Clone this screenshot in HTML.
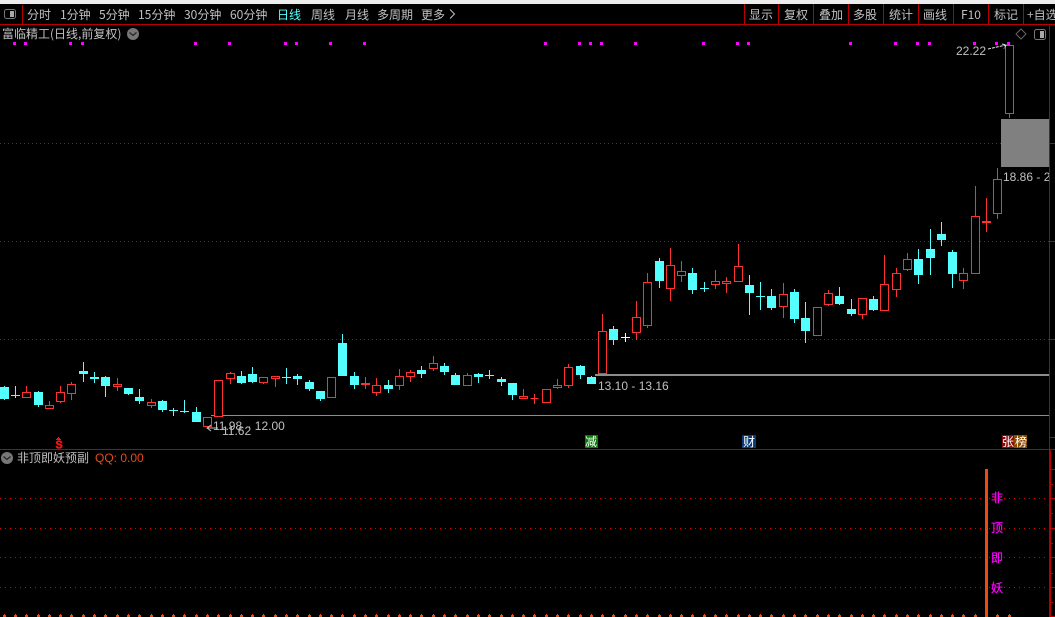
<!DOCTYPE html>
<html><head><meta charset="utf-8"><style>
html,body{margin:0;padding:0;background:#000;width:1055px;height:617px;overflow:hidden}
svg{display:block}
text{font-family:"WenQuanYi Zen Hei","Noto Sans CJK SC",sans-serif;font-size:12px;fill:#c0c0c0}
.n{font-family:"Liberation Sans",sans-serif}
</style></head><body>
<svg width="1055" height="617" viewBox="0 0 1055 617" xmlns="http://www.w3.org/2000/svg">
<rect width="1055" height="617" fill="#000"/>
<rect width="1055" height="4" fill="#ececec"/>
<g shape-rendering="crispEdges">
<path d="M0 143.5H1049M0 241.5H1049M0 339.5H1049" stroke="#c80000" stroke-dasharray="1 3" fill="none"/>
<path d="M0 498.5H985M0 528.5H985M0 557.5H985M0 587.5H985M989 498.5H1049M989 528.5H1049M989 557.5H1049M989 587.5H1049" stroke="#e00000" stroke-dasharray="1 4" fill="none"/>
<path d="M211 415.5H1049" stroke="#8c8c8c" fill="none"/>
<rect x="595" y="374" width="454" height="2" fill="#8c8c8c"/>
<rect x="1001" y="119" width="48" height="48" fill="#808080"/>
<!-- red wicks -->
<path fill="#ff3232" d="M26 386h1v12h-1zM49 401h1v8h-1zM60 386h1v17h-1zM71 382h1v18h-1zM117 378h1v13h-1zM151 399h1v9h-1zM230 372h1v12h-1zM263 377h1v7h-1zM275 376h1v11h-1zM365 377h1v12h-1zM376 378h1v18h-1zM399 369h1v21h-1zM410 370h1v12h-1zM433 356h1v15h-1zM467 373h1v13h-1zM523 389h1v10h-1zM534 394h1v10h-1zM557 379h1v10h-1zM568 364h1v24h-1zM602 314h1v60h-1zM636 301h1v39h-1zM647 273h1v55h-1zM670 248h1v53h-1zM681 261h1v21h-1zM715 270h1v19h-1zM726 277h1v16h-1zM738 244h1v38h-1zM783 283h1v35h-1zM828 290h1v16h-1zM862 298h1v21h-1zM884 255h1v56h-1zM896 268h1v29h-1zM907 253h1v18h-1zM963 268h1v21h-1zM975 186h1v88h-1zM986 198h1v34h-1zM997 168h1v51h-1zM1009 45h1v73h-1z"/>
<!-- red bodies -->
<path fill="#000" stroke="#ff3232" d="M22.500 392.500h8v5h-8zM45.500 405.500h8v3h-8zM56.500 392.500h8v9h-8zM67.500 384.500h8v9h-8zM113.500 384.500h8v2h-8zM147.500 402.500h8v3h-8zM203.500 417.500h8v9h-8zM214.500 380.500h8v36h-8zM226.500 373.500h8v5h-8zM259.500 377.500h8v5h-8zM271.500 376.500h8v2h-8zM327.500 377.500h8v20h-8zM361.500 383.500h8v1h-8zM372.500 385.500h8v7h-8zM395.500 376.500h8v9h-8zM406.500 372.500h8v4h-8zM429.500 363.500h8v5h-8zM463.500 375.500h8v10h-8zM519.500 396.500h8v2h-8zM530.500 398.500h8v0h-8zM542.500 389.500h8v13h-8zM553.500 385.500h8v2h-8zM564.500 367.500h8v18h-8zM598.500 331.500h8v42h-8zM632.500 317.500h8v15h-8zM643.500 282.500h8v43h-8zM666.500 265.500h8v23h-8zM677.500 271.500h8v4h-8zM711.500 281.500h8v3h-8zM722.500 281.500h8v2h-8zM734.500 266.500h8v15h-8zM779.500 294.500h8v12h-8zM813.500 307.500h8v28h-8zM824.500 293.500h8v11h-8zM858.500 298.500h8v16h-8zM880.500 284.500h8v26h-8zM892.500 273.500h8v16h-8zM903.500 259.500h8v10h-8zM959.500 273.500h8v7h-8zM971.500 216.500h8v57h-8zM982.500 221.500h8v1h-8zM993.500 179.500h8v34h-8zM1005.500 45.500h8v68h-8z"/>
<!-- cyan -->
<path fill="#54ffff" d="M4 386h1v14h-1zM0 387h9v12h-9zM15 386h1v12h-1zM11 395h9v1h-9zM38 391h1v16h-1zM34 392h9v13h-9zM83 362h1v20h-1zM79 371h9v3h-9zM94 372h1v11h-1zM90 377h9v2h-9zM105 376h1v21h-1zM101 377h9v9h-9zM128 388h1v7h-1zM124 388h9v6h-9zM139 389h1v15h-1zM135 397h9v4h-9zM162 400h1v12h-1zM158 401h9v9h-9zM173 408h1v8h-1zM169 410h9v1h-9zM184 400h1v13h-1zM180 411h9v1h-9zM196 407h1v15h-1zM192 412h9v10h-9zM241 371h1v13h-1zM237 376h9v7h-9zM252 367h1v16h-1zM248 374h9v8h-9zM286 368h1v16h-1zM282 377h9v1h-9zM297 374h1v11h-1zM293 376h9v3h-9zM309 380h1v11h-1zM305 382h9v7h-9zM320 391h1v10h-1zM316 391h9v8h-9zM342 334h1v42h-1zM338 343h9v33h-9zM354 372h1v17h-1zM350 376h9v9h-9zM388 380h1v13h-1zM384 385h9v4h-9zM421 366h1v12h-1zM417 370h9v4h-9zM444 363h1v12h-1zM440 366h9v6h-9zM455 373h1v12h-1zM451 375h9v10h-9zM478 373h1v10h-1zM474 374h9v3h-9zM489 370h1v9h-1zM485 375h9v1h-9zM501 377h1v9h-1zM497 379h9v3h-9zM512 383h1v17h-1zM508 383h9v12h-9zM580 365h1v14h-1zM576 366h9v9h-9zM591 376h1v8h-1zM587 377h9v7h-9zM613 326h1v19h-1zM609 329h9v11h-9zM659 258h1v30h-1zM655 261h9v20h-9zM692 268h1v26h-1zM688 273h9v17h-9zM704 282h1v10h-1zM700 288h9v1h-9zM749 275h1v40h-1zM745 285h9v8h-9zM760 282h1v28h-1zM756 296h9v1h-9zM771 289h1v21h-1zM767 296h9v12h-9zM794 289h1v34h-1zM790 292h9v27h-9zM805 302h1v41h-1zM801 318h9v13h-9zM839 287h1v18h-1zM835 296h9v8h-9zM851 299h1v17h-1zM847 309h9v5h-9zM873 296h1v15h-1zM869 299h9v11h-9zM918 249h1v35h-1zM914 259h9v16h-9zM930 229h1v46h-1zM926 249h9v9h-9zM941 222h1v24h-1zM937 234h9v6h-9zM952 250h1v38h-1zM948 252h9v22h-9z"/>
<path fill="#fff" d="M625 333h1v9h-1zM621 337h9v1h-9z"/>
<!-- magenta markers -->
<path fill="#ff00ff" d="M13 42h3v3h-3zM24 42h3v3h-3zM69 42h3v3h-3zM81 42h3v3h-3zM194 42h3v3h-3zM228 42h3v3h-3zM284 42h3v3h-3zM295 42h3v3h-3zM329 42h3v3h-3zM363 42h3v3h-3zM544 42h3v3h-3zM578 42h3v3h-3zM589 42h3v3h-3zM600 42h3v3h-3zM634 42h3v3h-3zM702 42h3v3h-3zM736 42h3v3h-3zM747 42h3v3h-3zM849 42h3v3h-3zM894 42h3v3h-3zM916 42h3v3h-3zM928 42h3v3h-3zM973 42h3v3h-3zM995 42h3v3h-3zM1007 42h3v3h-3z"/>
<!-- bottom pips -->
<path fill="#f04a10" d="M4 614h1v1h1v2h-3v-2h1zM15 614h1v1h1v2h-3v-2h1zM26 614h1v1h1v2h-3v-2h1zM38 614h1v1h1v2h-3v-2h1zM49 614h1v1h1v2h-3v-2h1zM60 614h1v1h1v2h-3v-2h1zM71 614h1v1h1v2h-3v-2h1zM83 614h1v1h1v2h-3v-2h1zM94 614h1v1h1v2h-3v-2h1zM105 614h1v1h1v2h-3v-2h1zM117 614h1v1h1v2h-3v-2h1zM128 614h1v1h1v2h-3v-2h1zM139 614h1v1h1v2h-3v-2h1zM151 614h1v1h1v2h-3v-2h1zM162 614h1v1h1v2h-3v-2h1zM173 614h1v1h1v2h-3v-2h1zM184 614h1v1h1v2h-3v-2h1zM196 614h1v1h1v2h-3v-2h1zM207 614h1v1h1v2h-3v-2h1zM218 614h1v1h1v2h-3v-2h1zM230 614h1v1h1v2h-3v-2h1zM241 614h1v1h1v2h-3v-2h1zM252 614h1v1h1v2h-3v-2h1zM263 614h1v1h1v2h-3v-2h1zM275 614h1v1h1v2h-3v-2h1zM286 614h1v1h1v2h-3v-2h1zM297 614h1v1h1v2h-3v-2h1zM309 614h1v1h1v2h-3v-2h1zM320 614h1v1h1v2h-3v-2h1zM331 614h1v1h1v2h-3v-2h1zM342 614h1v1h1v2h-3v-2h1zM354 614h1v1h1v2h-3v-2h1zM365 614h1v1h1v2h-3v-2h1zM376 614h1v1h1v2h-3v-2h1zM388 614h1v1h1v2h-3v-2h1zM399 614h1v1h1v2h-3v-2h1zM410 614h1v1h1v2h-3v-2h1zM421 614h1v1h1v2h-3v-2h1zM433 614h1v1h1v2h-3v-2h1zM444 614h1v1h1v2h-3v-2h1zM455 614h1v1h1v2h-3v-2h1zM467 614h1v1h1v2h-3v-2h1zM478 614h1v1h1v2h-3v-2h1zM489 614h1v1h1v2h-3v-2h1zM501 614h1v1h1v2h-3v-2h1zM512 614h1v1h1v2h-3v-2h1zM523 614h1v1h1v2h-3v-2h1zM534 614h1v1h1v2h-3v-2h1zM546 614h1v1h1v2h-3v-2h1zM557 614h1v1h1v2h-3v-2h1zM568 614h1v1h1v2h-3v-2h1zM580 614h1v1h1v2h-3v-2h1zM591 614h1v1h1v2h-3v-2h1zM602 614h1v1h1v2h-3v-2h1zM613 614h1v1h1v2h-3v-2h1zM625 614h1v1h1v2h-3v-2h1zM636 614h1v1h1v2h-3v-2h1zM647 614h1v1h1v2h-3v-2h1zM659 614h1v1h1v2h-3v-2h1zM670 614h1v1h1v2h-3v-2h1zM681 614h1v1h1v2h-3v-2h1zM692 614h1v1h1v2h-3v-2h1zM704 614h1v1h1v2h-3v-2h1zM715 614h1v1h1v2h-3v-2h1zM726 614h1v1h1v2h-3v-2h1zM738 614h1v1h1v2h-3v-2h1zM749 614h1v1h1v2h-3v-2h1zM760 614h1v1h1v2h-3v-2h1zM771 614h1v1h1v2h-3v-2h1zM783 614h1v1h1v2h-3v-2h1zM794 614h1v1h1v2h-3v-2h1zM805 614h1v1h1v2h-3v-2h1zM817 614h1v1h1v2h-3v-2h1zM828 614h1v1h1v2h-3v-2h1zM839 614h1v1h1v2h-3v-2h1zM851 614h1v1h1v2h-3v-2h1zM862 614h1v1h1v2h-3v-2h1zM873 614h1v1h1v2h-3v-2h1zM884 614h1v1h1v2h-3v-2h1zM896 614h1v1h1v2h-3v-2h1zM907 614h1v1h1v2h-3v-2h1zM918 614h1v1h1v2h-3v-2h1zM930 614h1v1h1v2h-3v-2h1zM941 614h1v1h1v2h-3v-2h1zM952 614h1v1h1v2h-3v-2h1zM963 614h1v1h1v2h-3v-2h1zM975 614h1v1h1v2h-3v-2h1zM997 614h1v1h1v2h-3v-2h1zM1009 614h1v1h1v2h-3v-2h1z"/>
<rect x="985" y="469" width="3" height="148" fill="#f04a10"/>
<!-- badges -->
<rect x="585" y="435" width="13" height="13" fill="#0a7a0a"/>
<rect x="742" y="435" width="14" height="13" fill="#0a3a78"/>
<rect x="1002" y="435" width="12" height="13" fill="#8b0a0a"/>
<rect x="1014" y="435" width="13" height="13" fill="#8a4a00"/>
<path fill="#ff1010" d="M58 437h1v1h1v1h1v1h-5v-1h1v-1h1z"/>
</g>

<!-- price labels -->
<text class="n" x="956" y="55">22.22</text>
<path d="M988 49L1006 45M1002 44l4 1-2 4" stroke="#e0e0e0" fill="none" stroke-dasharray="3 1"/>
<text class="n" x="1003" y="181">18.86 - 22.22</text>
<text class="n" x="598" y="390">13.10 - 13.16</text>
<text class="n" x="213" y="430" style="word-spacing:1px">11.98 - 12.00</text>
<text class="n" x="222" y="435">11.62</text>
<path d="M218 428H207M211 425l-4 3 4 3" stroke="#c0c0c0" fill="none"/>
<rect x="1050" y="25" width="5" height="424" fill="#000"/>

<!-- signal text -->
<text x="585" y="446" style="fill:#fff">减</text>
<text x="743" y="446" style="fill:#fff">财</text>
<text x="1002" y="446" style="fill:#fff">张</text>
<text x="1015" y="446" style="fill:#fff">榜</text>
<text x="55.500" y="448.500" style="fill:#ff1010;font-weight:bold;font-size:12px;font-family:'Liberation Mono',monospace;stroke:#ff1010;stroke-width:.4">S</text>

<!-- menu -->
<g>
<text x="27" y="19">分时</text>
<text x="60" y="19">1分钟</text>
<text x="99" y="19">5分钟</text>
<text x="138" y="19">15分钟</text>
<text x="184" y="19">30分钟</text>
<text x="230" y="19">60分钟</text>
<text x="277" y="19" style="fill:#54ffff">日线</text>
<text x="311" y="19">周线</text>
<text x="345" y="19">月线</text>
<text x="377" y="19">多周期</text>
<text x="421" y="19">更多</text>
<path d="M450 9.500l4.500 4.500-4.500 4.500" stroke="#c0c0c0" fill="none"/>
<text x="749" y="19">显示</text>
<text x="784" y="19">复权</text>
<text x="819" y="19">叠加</text>
<text x="853" y="19">多股</text>
<text x="889" y="19">统计</text>
<text x="923" y="19">画线</text>
<text x="961" y="19">F10</text>
<text x="994" y="19">标记</text>
<text x="1027" y="19">+自选</text>
</g>
<g shape-rendering="crispEdges">
<path d="M0 24.500H1055M0 449.500H1055M22.500 5V24M744.500 4V24M778.500 4V24M813.500 4V24M848.500 4V24M883.500 4V24M918.500 4V24M953.500 4V24M988.500 4V24M1023.500 4V24M1049.500 24V449" stroke="#b80000" fill="none"/>
<rect x="1049" y="449" width="2" height="168" fill="#b80000"/>
<path d="M1050 143.500h5M1050 241.500h5M1050 339.500h5M1050 437.500h5M1050 469.500h5M1050 484.500h3M1050 498.500h5M1050 513.500h3M1050 528.500h5M1050 543.500h3M1050 557.500h5M1050 573.500h3M1050 587.500h5M1050 602.500h3M1050 616.500h5" stroke="#b80000" fill="none"/>
</g>
<!-- toggles -->
<rect x="4.500" y="9.500" width="11" height="9" rx="2" fill="none" stroke="#777"/>
<rect x="10" y="11" width="4" height="6" fill="#aaa"/>
<rect x="1034.500" y="29.500" width="11" height="10" rx="2" fill="none" stroke="#777"/>
<rect x="1040" y="31" width="4" height="7" fill="#aaa"/>
<path d="M1021 29l5 5-5 5-5-5z" fill="none" stroke="#666"/>
<!-- title -->
<text x="2" y="38">富临精工(日线,前复权)</text>
<circle cx="133" cy="34" r="6" fill="#777"/>
<path d="M129.500 32.500l3.500 3 3.500-3" stroke="#222" fill="none" stroke-width="1.200"/>
<circle cx="7" cy="458" r="6" fill="#777"/>
<path d="M3.500 456.500l3.500 3 3.500-3" stroke="#222" fill="none" stroke-width="1.200"/>
<text x="17" y="462">非顶即妖预副</text>
<text class="n" x="95" y="462" style="fill:#e8481a">QQ: 0.00</text>
<text x="991" y="502" style="fill:#ff00ff;stroke:#ff00ff;stroke-width:.25">非</text>
<text x="991" y="532" style="fill:#ff00ff;stroke:#ff00ff;stroke-width:.25">顶</text>
<text x="991" y="562" style="fill:#ff00ff;stroke:#ff00ff;stroke-width:.25">即</text>
<text x="991" y="592" style="fill:#ff00ff;stroke:#ff00ff;stroke-width:.25">妖</text>
</svg>
</body></html>
